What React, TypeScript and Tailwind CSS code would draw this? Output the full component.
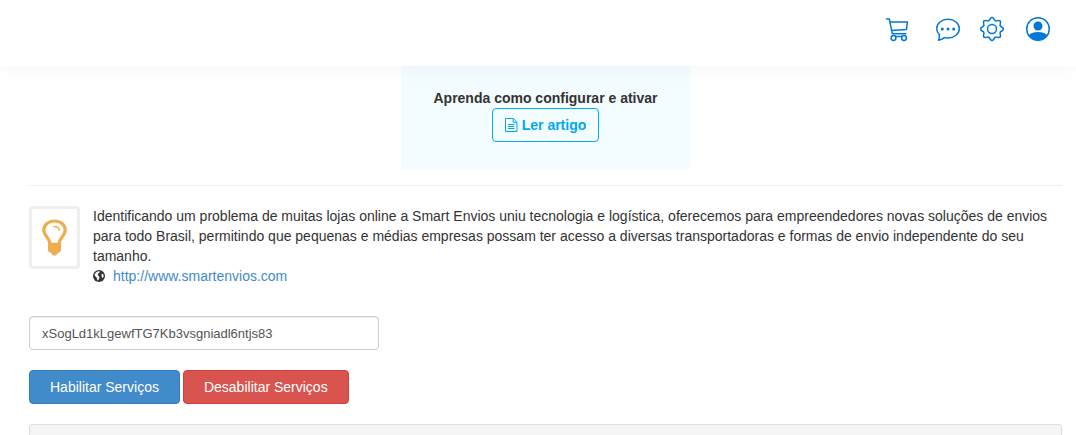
import React, { useState } from "react";

const iconProps = {
  width: 26,
  height: 26,
  viewBox: "0 0 26 26",
  fill: "none",
  stroke: "currentColor",
  strokeWidth: 1.5,
  strokeLinecap: "round" as const,
  strokeLinejoin: "round" as const,
};

const teeth = [0, 45, 90, 135, 180, 225, 270, 315];

const CartIcon = () => (
  <svg {...iconProps}>
    <path d="M1.500 3h2.800l3 14.700M4.900 5.900h17.600l-1.100 7.600-15 .9M7.300 17.700h13.500" />
    <circle cx="8.500" cy="22" r="2.400" />
    <circle cx="19" cy="22" r="2.400" />
    <path d="M10.700 20.500h6.100" />
  </svg>
);

const ChatIcon = () => (
  <svg {...iconProps}>
    <path d="M13 3.300c6.400 0 11.300 4 11.300 9.300S19.400 22 13 22c-1.200 0-2.400-.1-3.500-.4-1.800 1.500-3.800 2.300-6 2.600.7-1.700 1-3.600.9-5.600-1.700-1.500-2.700-3.600-2.700-6C1.700 7.300 6.600 3.300 13 3.300z" />
    <g fill="currentColor" stroke="none">
      <circle cx="7.300" cy="13" r="1.500" />
      <circle cx="13" cy="13" r="1.500" />
      <circle cx="18.700" cy="13" r="1.500" />
    </g>
  </svg>
);

const GearIcon = () => (
  <svg {...iconProps}>
    {teeth.map((angle) => (
      <path
        key={angle}
        d="M13 1.600C15.200 1.600 14.650 4.080 16.400 4.800 18.150 5.520 19.500 3.370 21.060 4.940"
        transform={`rotate(${angle} 13 13)`}
      />
    ))}
    <circle cx="13" cy="13" r="4.500" />
  </svg>
);

const UserIcon = () => (
  <svg {...iconProps}>
    <circle cx="13" cy="13" r="11.300" />
    <circle cx="13" cy="10" r="4.500" fill="currentColor" stroke="none" />
    <path
      d="M3.800 19.200c2-2 5.200-3.100 9.200-3.100s7.200 1.100 9.200 3.100A11.300 11.300 0 0 1 13 24.300a11.300 11.300 0 0 1-9.200-5.100z"
      fill="currentColor"
      stroke="none"
    />
  </svg>
);

const FileIcon = () => (
  <svg
    width="13"
    height="14"
    viewBox="0 0 13 14"
    fill="none"
    stroke="currentColor"
    strokeLinejoin="round"
  >
    <path d="M.5.5h7.700l3.800 3.800v9.200H.5zM8.200.5v3.800h3.800M3 6.500h6.500M3 8.500h6.500M3 10.500h6.500" />
  </svg>
);

const BulbIcon = () => (
  <svg width="25" height="37" viewBox="0 0 25 37" fill="none">
    <path
      d="M7.700 24c0-5.200-5.900-7-5.900-12.700C1.800 5.700 6.500 2 12.500 2s10.700 3.700 10.700 9.300c0 5.700-5.900 7.500-5.900 12.700"
      stroke="#f0ad4e"
      strokeWidth="3.200"
    />
    <path
      d="M12 7.500c2.800 0 4.700 1 5.200 3.400"
      stroke="#f0ad4e"
      strokeWidth="1.600"
      strokeLinecap="round"
    />
    <path
      d="M6 23.800h13v7.200c0 1.500-1 2.300-2.400 2.800l-.8.300c-.5 1.500-1.600 2.500-3.300 2.500s-2.800-1-3.300-2.500l-.8-.3C7 33.300 6 32.500 6 31z"
      fill="#f0ad4e"
    />
  </svg>
);

const GlobeIcon = () => (
  <svg width="12" height="12" viewBox="0 0 12 12">
    <circle cx="6" cy="6" r="6" fill="currentColor" />
    <path
      d="M5 1.200 7 1.500 6.300 2.800 5.200 3.600 4.700 4.700 5.600 6 6.600 7.400 5.900 9 5 10.800 4 9.300 3.700 7.400 2 6 1.400 4.600 3 2.400z"
      fill="#fff"
    />
    <path d="M8.500 3.800 10.300 4.300l.3 1.900-1 2-.9-1.200z" fill="#fff" />
  </svg>
);

export default function App() {
  const [token, setToken] = useState("xSogLd1kLgewfTG7Kb3vsgniadl6ntjs83");

  return (
    <div className="bg-white font-['Liberation_Sans',Arial,sans-serif] text-sm leading-5 text-[#333]">
      <header className="relative z-10 flex h-[66px] items-center justify-end bg-white pr-[25px] pb-2 text-[#0078d7] shadow-[0_4px_20px_rgba(0,0,0,0.03)]">
        <button type="button" aria-label="Carrinho" className="mr-6">
          <CartIcon />
        </button>
        <button type="button" aria-label="Mensagens" className="mr-[18px]">
          <ChatIcon />
        </button>
        <button type="button" aria-label="Configurações" className="mr-5">
          <GearIcon />
        </button>
        <button type="button" aria-label="Minha conta">
          <UserIcon />
        </button>
      </header>

      <main className="pl-[29px] pr-[14px]">
        <section className="mx-auto max-w-[290px] bg-[#f3fcff] pt-[22px] pb-[27px] text-center font-bold">
          <h2>Aprenda como configurar e ativar</h2>
          <a
            href="#artigo"
            className="inline-flex h-[34px] items-center gap-1 rounded border border-[#00aeef] px-3 align-top text-[#00a8ef]"
          >
            <FileIcon />
            Ler artigo
          </a>
        </section>

        <hr className="mt-4 mb-5 border-[#eee]" />

        <div className="flex items-start gap-[13px]">
          <div className="flex h-[63px] w-[51px] shrink-0 items-center justify-center rounded border-[3px] border-[#eee]">
            <BulbIcon />
          </div>
          <div>
            <p>
              Identificando um problema de muitas lojas online a Smart Envios
              uniu tecnologia e logística, oferecemos para empreendedores novas
              soluções de envios para todo Brasil, permitindo que pequenas e
              médias empresas possam ter acesso a diversas transportadoras e
              formas de envio independente do seu tamanho.
            </p>
            <div className="flex items-center gap-2">
              <GlobeIcon />
              <a href="http://www.smartenvios.com" className="text-[#428bca]">
                http://www.smartenvios.com
              </a>
            </div>
          </div>
        </div>

        <form className="mt-[30px]" onSubmit={(e) => e.preventDefault()}>
          <input
            type="text"
            name="token"
            aria-label="Token"
            value={token}
            onChange={(e) => setToken(e.target.value)}
            className="block h-[34px] w-full max-w-[350px] rounded border border-[#ccc] px-3 text-[13px] text-[#555] shadow-[inset_0_1px_1px_rgba(0,0,0,0.075)]"
          />
          <div className="mt-5 flex gap-[3px] text-white">
            <button
              type="submit"
              className="h-[34px] rounded border border-[#357ebd] bg-[#428bca] px-5"
            >
              Habilitar Serviços
            </button>
            <button
              type="button"
              className="h-[34px] rounded border border-[#d43f3a] bg-[#d9534f] px-5"
            >
              Desabilitar Serviços
            </button>
          </div>
        </form>

        <div className="mt-5 rounded-t border border-b-0 border-[#ddd] bg-[#f5f5f5] pt-2.5" />
      </main>
    </div>
  );
}
